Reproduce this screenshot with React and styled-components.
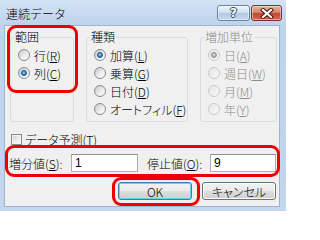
import styled, { createGlobalStyle } from 'styled-components';

const GlobalStyle = createGlobalStyle`
  html, body {
    margin: 0;
    padding: 0;
    background: #ffffff;
  }
  body {
    font-family: "Noto Sans CJK JP", "Noto Sans", sans-serif;
    font-weight: 300;
    font-feature-settings: "palt";
  }
`;

const Window = styled.div`
  position: relative;
  width: 286px;
  height: 211px;
  display: flex;
  flex-direction: column;
  background: linear-gradient(#d3e3f5 0, #bed4ed 24px, #c2d7ee 100%);
  overflow: hidden;
`;

const TitleBar = styled.div`
  height: 25px;
  flex: none;
  display: flex;
  align-items: flex-start;
  padding: 0 4px 0 6px;
  box-sizing: border-box;
`;

const Title = styled.div`
  font-size: 12px;
  line-height: 14px;
  margin-top: 7px;
  color: #000;
  font-feature-settings: normal;
`;

const TitleButtons = styled.div`
  margin-left: auto;
  margin-top: 5px;
  display: flex;
  gap: 1px;
`;

const CaptionButton = styled.div`
  height: 16px;
  box-sizing: border-box;
  border-radius: 3px;
  display: flex;
  align-items: center;
  justify-content: center;
  width: ${p => p.$w}px;
  border: 1px solid ${p => (p.$close ? '#7b3327' : '#6a84a3')};
  background: ${p =>
    p.$close
      ? 'linear-gradient(#eab0a1 0, #d98672 45%, #c24a33 52%, #d0694f 100%)'
      : 'linear-gradient(#eef4fb 0, #d2e1f1 45%, #b1c9e4 52%, #c6d9ee 100%)'};
  box-shadow: inset 0 0 0 1px rgba(255, 255, 255, 0.45);
`;

const HelpGlyph = styled.span`
  font-family: "DejaVu Sans", sans-serif;
  font-weight: bold;
  font-size: 12px;
  line-height: 12px;
  color: #ffffff;
  text-shadow: 1px 0 0 #2f4a68, -1px 0 0 #2f4a68, 0 1px 0 #2f4a68, 0 -1px 0 #2f4a68;
`;

const Client = styled.div`
  flex: 1;
  margin: 0 6px 4px 4px;
  background: #f0f0f0;
  border: 1px solid #9fb5d0;
  box-sizing: border-box;
  display: flex;
  flex-direction: column;
  font-size: 12px;
  color: #000;
`;

const GroupsRow = styled.div`
  display: flex;
  gap: 11px;
  padding: 5px 0 0 5px;
`;

const Group = styled.fieldset`
  margin: 0;
  padding: 0 3px 0 3px;
  min-width: 0;
  width: ${p => p.$w}px;
  height: 91px;
  box-sizing: border-box;
  border: 1px solid #d5dfe5;
  border-radius: 3px;
  & + & {
    margin-left: ${p => p.$gap || 0}px;
  }
`;

const Legend = styled.legend`
  padding: 0 1px;
  font-size: 12px;
  line-height: 12px;
  color: ${p => (p.$disabled ? '#8a8a8a' : '#000')};
`;

const OptionList = styled.div`
  margin-top: 3px;
  display: flex;
  flex-direction: column;
`;

const Option = styled.div`
  height: 18px;
  display: flex;
  align-items: center;
  gap: 4px;
  padding-left: 4px;
  white-space: nowrap;
  color: ${p => (p.$disabled ? '#8d8d8d' : '#000')};
`;

const RadioMark = styled.span`
  width: 12px;
  height: 12px;
  flex: none;
  box-sizing: border-box;
  border-radius: 50%;
  display: flex;
  align-items: center;
  justify-content: center;
  border: 1px solid ${p => (p.$disabled ? '#cacaca' : '#8a8b8c')};
  background: ${p =>
    p.$disabled
      ? 'linear-gradient(135deg, #e6e6e6, #f8f8f8)'
      : 'linear-gradient(135deg, #c9c9c9 0, #ececec 55%, #ffffff 100%)'};
  &::after {
    content: '';
    display: ${p => (p.$checked ? 'block' : 'none')};
    width: 6px;
    height: 6px;
    border-radius: 50%;
    box-sizing: border-box;
    border: 1px solid ${p => (p.$disabled ? '#8e8e8e' : '#1c4f7e')};
    background: ${p =>
      p.$disabled
        ? 'radial-gradient(circle at 45% 40%, #d8d8d8, #9a9a9a)'
        : 'radial-gradient(circle at 45% 40%, #9fdcff, #2c85c9 60%, #15548b)'};
  }
`;

const CheckRow = styled.div`
  margin-top: 10px;
  height: 14px;
  display: flex;
  align-items: center;
  gap: 3px;
  padding-left: 6px;
`;

const CheckMark = styled.span`
  width: 11px;
  height: 11px;
  flex: none;
  box-sizing: border-box;
  border: 1px solid #8a8b8c;
  background: linear-gradient(135deg, #cdcdcd 0, #ececec 55%, #fbfbfb 100%);
  box-shadow: inset 0 0 0 1px #f4f4f4;
`;

const InputRow = styled.div`
  margin-top: 8px;
  height: 18px;
  display: flex;
  align-items: center;
  padding-left: 4px;
`;

const FieldLabel = styled.label`
  width: ${p => p.$w}px;
  margin-left: ${p => p.$ml || 0}px;
  flex: none;
  white-space: nowrap;
`;

const TextBox = styled.div`
  width: ${p => p.$w}px;
  height: 18px;
  flex: none;
  box-sizing: border-box;
  border: 1px solid #abadb3;
  border-top-color: #8e9199;
  background: #ffffff;
  padding-left: 3px;
  font-family: "Liberation Sans", sans-serif;
  font-weight: 400;
  font-size: 12px;
  line-height: 16px;
`;

const ButtonRow = styled.div`
  margin-top: 10px;
  display: flex;
  justify-content: flex-end;
  gap: 10px;
  padding-right: 3px;
`;

const Button = styled.div`
  width: 74px;
  height: 18px;
  box-sizing: border-box;
  border-radius: 3px;
  display: flex;
  align-items: center;
  justify-content: center;
  font-size: 12px;
  border: 1px solid ${p => (p.$default ? '#3c7fb1' : '#707070')};
  background: linear-gradient(#f2f2f2 0, #ebebeb 48%, #dddddd 52%, #cfcfcf 100%);
  box-shadow: ${p =>
    p.$default ? 'inset 0 0 0 1px #62d0f8' : 'inset 0 0 0 1px #fbfbfb'};
`;

const Highlight = styled.div`
  position: absolute;
  left: ${p => p.$x}px;
  top: ${p => p.$y}px;
  width: ${p => p.$w}px;
  height: ${p => p.$h}px;
  box-sizing: border-box;
  border: 3px solid #ee0000;
  border-radius: 9px;
  pointer-events: none;
`;

const Key = styled.span`
  text-decoration: underline;
  text-underline-offset: 1px;
`;

const Radio = ({ checked, disabled, label, hotkey }) => (
  <Option $disabled={disabled}>
    <RadioMark $checked={checked} $disabled={disabled} />
    <span>
      {label}(<Key>{hotkey}</Key>)
    </span>
  </Option>
);

const CloseIcon = () => (
  <svg width="14" height="11" viewBox="0 0 14 11">
    <path d="M3 2 L11 9 M11 2 L3 9" stroke="#4a1a12" strokeWidth="4.2" strokeLinecap="square" />
    <path d="M3 2 L11 9 M11 2 L3 9" stroke="#ffffff" strokeWidth="2.2" strokeLinecap="square" />
  </svg>
);

export default function App() {
  return (
    <>
      <GlobalStyle />
      <Window>
        <TitleBar>
          <Title>連続データ</Title>
          <TitleButtons>
            <CaptionButton $w={33}>
              <HelpGlyph>?</HelpGlyph>
            </CaptionButton>
            <CaptionButton $w={31} $close>
              <CloseIcon />
            </CaptionButton>
          </TitleButtons>
        </TitleBar>
        <Client>
          <GroupsRow>
            <Group $w={64}>
              <Legend>範囲</Legend>
              <OptionList>
                <Radio label="行" hotkey="R" />
                <Radio label="列" hotkey="C" checked />
              </OptionList>
            </Group>
            <Group $w={102}>
              <Legend>種類</Legend>
              <OptionList>
                <Radio label="加算" hotkey="L" checked />
                <Radio label="乗算" hotkey="G" />
                <Radio label="日付" hotkey="D" />
                <Radio label="オートフィル" hotkey="F" />
              </OptionList>
            </Group>
            <Group $w={77} $gap={1}>
              <Legend $disabled>増加単位</Legend>
              <OptionList>
                <Radio label="日" hotkey="A" checked disabled />
                <Radio label="週日" hotkey="W" disabled />
                <Radio label="月" hotkey="M" disabled />
                <Radio label="年" hotkey="Y" disabled />
              </OptionList>
            </Group>
          </GroupsRow>
          <CheckRow>
            <CheckMark />
            <span>
              データ予測(<Key>T</Key>)
            </span>
          </CheckRow>
          <InputRow>
            <FieldLabel $w={62}>
              増分値(<Key>S</Key>):
            </FieldLabel>
            <TextBox $w={67}>1</TextBox>
            <FieldLabel $w={63} $ml={9}>
              停止値(<Key>O</Key>):
            </FieldLabel>
            <TextBox $w={66}>9</TextBox>
          </InputRow>
          <ButtonRow>
            <Button $default>OK</Button>
            <Button>キャンセル</Button>
          </ButtonRow>
        </Client>
        <Highlight $x={7} $y={25} $w={71} $h={68} />
        <Highlight $x={5} $y={145} $w={275} $h={32} />
        <Highlight $x={112} $y={177} $w={88} $h={29} />
      </Window>
    </>
  );
}
